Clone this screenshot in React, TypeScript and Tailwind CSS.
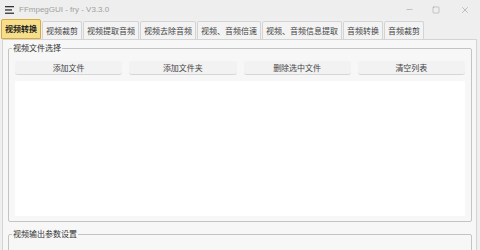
import { Minus, Square, X } from 'lucide-react';

const TABS = [
  '视频转换',
  '视频裁剪',
  '视频提取音频',
  '视频去除音频',
  '视频、音频倍速',
  '视频、音频信息提取',
  '音频转换',
  '音频裁剪'
];

const BUTTONS = ['添加文件', '添加文件夹', '删除选中文件', '清空列表'];

const FONT = "font-['Noto_Sans_CJK_SC','Liberation_Sans',sans-serif]";

function GroupBox({ title, children }: { title: string; children?: React.ReactNode }) {
  return (
    <div className="relative border border-[#c4c4c4] rounded-[2px] ml-[5px] mr-[4px]">
      <span className="absolute -top-[7px] left-[3px] bg-[#f7f7f7] px-[1px] text-[8px] leading-[12px] text-[#333]">
        {title}
      </span>
      {children}
    </div>
  );
}

export default function App(): JSX.Element {
  return (
    <div className={`w-[480px] h-[250px] overflow-hidden bg-[#efefef] ${FONT}`}>
      <div className="h-[19px] flex items-center bg-[#eeeeee]">
        <svg width="9" height="8" viewBox="0 0 9 8" className="ml-[5px] mr-[5px]">
          <rect x="0" y="0" width="9" height="1.3" fill="#333" />
          <rect x="0" y="3.3" width="7" height="1.3" fill="#333" />
          <rect x="0" y="6.6" width="9" height="1.3" fill="#333" />
        </svg>
        <span className="text-[8px] text-[#a0a0a0] font-['Liberation_Sans',sans-serif]">
          FFmpegGUI - fry - V3.3.0
        </span>
        <div className="ml-auto flex items-center text-[#777]">
          <div className="w-[25px] flex justify-center">
            <Minus size={9} strokeWidth={1} />
          </div>
          <div className="w-[28px] flex justify-center">
            <Square size={8} strokeWidth={1} />
          </div>
          <div className="w-[30px] flex justify-center">
            <X size={10} strokeWidth={1} />
          </div>
        </div>
      </div>
      <div className="flex items-end h-[20px] pl-[1px] gap-[1px]">
        {TABS.map((t, i) => (
          <div
            key={t}
            className={
              i === 0
                ? 'h-[20px] px-[3px] flex items-center text-[8px] font-bold text-[#222] bg-[#f7df8a] border border-[#d9a93c] rounded-t-[2px]'
                : 'h-[18px] px-[3px] flex items-center text-[8px] text-[#444] bg-[#f3f3f3] border border-[#d4d4d4] border-b-0 rounded-t-[2px]'
            }
          >
            {t}
          </div>
        ))}
      </div>
      <div className="h-[220px] ml-[2px] mr-[3px] border border-[#d4d4d4] bg-[#f7f7f7] pt-[8px]">
        <GroupBox title="视频文件选择">
          <div className="px-[6px] pt-[12px] pb-[5px]">
            <div className="grid grid-cols-4 gap-x-[7px]">
              {BUTTONS.map((b) => (
                <div
                  key={b}
                  className="h-[14px] flex items-center justify-center text-[8px] text-[#444] bg-[#f2f2f2] border-b border-[#d6d6d6] rounded-[3px]"
                >
                  {b}
                </div>
              ))}
            </div>
            <div className="mt-[6px] h-[135px] bg-white" />
          </div>
        </GroupBox>
        <div className="h-[12px]" />
        <GroupBox title="视频输出参数设置">
          <div className="h-[20px]" />
        </GroupBox>
      </div>
    </div>
  );
}
